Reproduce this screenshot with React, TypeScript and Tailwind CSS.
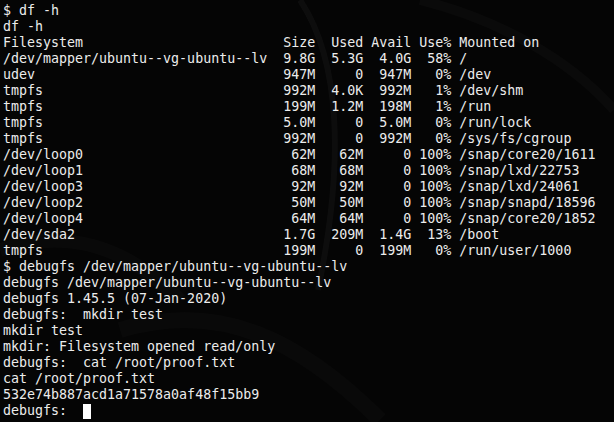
const lines = [
  '$ df -h',
  'df -h',
  'Filesystem                         Size  Used Avail Use% Mounted on',
  '/dev/mapper/ubuntu--vg-ubuntu--lv  9.8G  5.3G  4.0G  58% /',
  'udev                               947M     0  947M   0% /dev',
  'tmpfs                              992M  4.0K  992M   1% /dev/shm',
  'tmpfs                              199M  1.2M  198M   1% /run',
  'tmpfs                              5.0M     0  5.0M   0% /run/lock',
  'tmpfs                              992M     0  992M   0% /sys/fs/cgroup',
  '/dev/loop0                          62M   62M     0 100% /snap/core20/1611',
  '/dev/loop1                          68M   68M     0 100% /snap/lxd/22753',
  '/dev/loop3                          92M   92M     0 100% /snap/lxd/24061',
  '/dev/loop2                          50M   50M     0 100% /snap/snapd/18596',
  '/dev/loop4                          64M   64M     0 100% /snap/core20/1852',
  '/dev/sda2                          1.7G  209M  1.4G  13% /boot',
  'tmpfs                              199M     0  199M   0% /run/user/1000',
  '$ debugfs /dev/mapper/ubuntu--vg-ubuntu--lv',
  'debugfs /dev/mapper/ubuntu--vg-ubuntu--lv',
  'debugfs 1.45.5 (07-Jan-2020)',
  'debugfs:  mkdir test',
  'mkdir test',
  'mkdir: Filesystem opened read/only',
  'debugfs:  cat /root/proof.txt',
  'cat /root/proof.txt',
  '532e74b887acd1a71578a0af48f15bb9',
];

function Wallpaper() {
  // faint swirls of the desktop background showing through
  return (
    <svg className="absolute inset-0 h-full w-full" viewBox="0 0 614 422" fill="none">
      <path d="M300 0 C 340 60, 345 160, 318 290" stroke="#ffffff" strokeOpacity="0.035" strokeWidth="6" />
      <path d="M420 0 C 500 20, 570 60, 614 110" stroke="#ffffff" strokeOpacity="0.025" strokeWidth="10" />
      <path d="M0 250 C 60 230, 120 240, 180 300" stroke="#ffffff" strokeOpacity="0.02" strokeWidth="14" />
      <path d="M120 330 C 220 300, 300 340, 380 420" stroke="#ffffff" strokeOpacity="0.02" strokeWidth="16" />
    </svg>
  );
}

export default function App() {
  return (
    <div className="relative h-[422px] w-[614px] overflow-hidden bg-[#050505]">
      <Wallpaper />
      <pre className="relative m-0 whitespace-pre pl-[3px] pt-[3px] font-['DejaVu_Sans_Mono',monospace] text-[13.3px] leading-4 text-[#ececec]">
        {lines.map((line, i) => (
          <div key={i}>{line}</div>
        ))}
        <div className="flex items-center">
          <span>debugfs:  </span>
          <span className="inline-block h-[15px] w-2 bg-white" />
        </div>
      </pre>
    </div>
  );
}
